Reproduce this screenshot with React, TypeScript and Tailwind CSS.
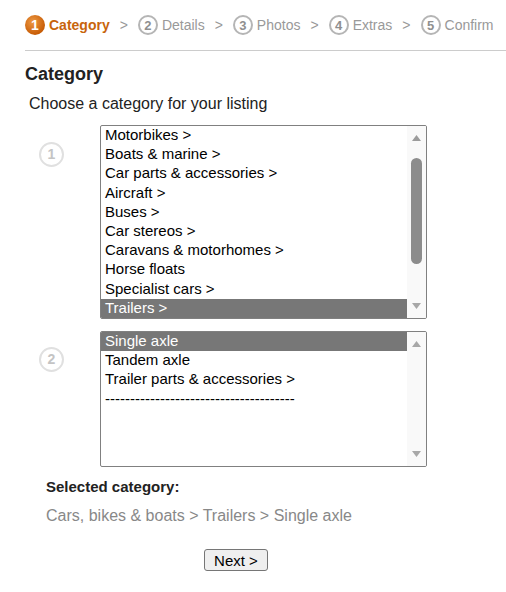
import React from 'react';

const steps = ['Category', 'Details', 'Photos', 'Extras', 'Confirm'];

const topList = [
  'Motorbikes >',
  'Boats & marine >',
  'Car parts & accessories >',
  'Aircraft >',
  'Buses >',
  'Car stereos >',
  'Caravans & motorhomes >',
  'Horse floats',
  'Specialist cars >',
  'Trailers >',
];

const subList = ['Single axle', 'Tandem axle', 'Trailer parts & accessories >', '--------------------------------------'];

const StepDot = ({ n, active }: { n: number; active: boolean }) =>
  active ? (
    <span className="w-[20px] h-[20px] rounded-full bg-[radial-gradient(circle_at_40%_35%,#ee9a45,#c85d06_70%,#b04f00)] text-white text-[14px] font-bold flex items-center justify-center leading-none">
      {n}
    </span>
  ) : (
    <span className="w-[20px] h-[20px] rounded-full border-2 border-[#b5b5b5] text-[#8f8f8f] text-[13px] font-bold flex items-center justify-center leading-none">
      {n}
    </span>
  );

const Marker = ({ n, className }: { n: number; className?: string }) => (
  <div className={`w-[25px] h-[25px] rounded-full border-2 border-[#e0e0e0] text-[#c4c4c4] text-[14px] font-bold flex items-center justify-center ${className ?? ''}`}>
    {n}
  </div>
);

const Listbox = ({
  items,
  selected,
  rows,
  thumb,
}: {
  items: string[];
  selected: number;
  rows: number;
  thumb?: { top: number; height: number };
}) => (
  <div className="flex w-[327px] border border-[#808080] rounded-[2px] bg-white overflow-hidden" style={{ height: rows * 19.2 + 2 }}>
    <div className="flex-1 flex flex-col">
      {items.map((item, i) => (
        <div
          key={item}
          className={`h-[19.2px] pl-[4px] text-[15px] leading-[18px] whitespace-nowrap ${
            i === selected ? 'bg-[#777777] text-white' : 'text-black'
          }`}
        >
          {item}
        </div>
      ))}
    </div>
    <div className="relative w-[19px] bg-[#f9f9f9]">
      <svg className="absolute left-[5px] top-[9px]" width="9" height="6" viewBox="0 0 9 6">
        <path d="M4.5 0 L9 6 L0 6 Z" fill={thumb ? '#9b9b9b' : '#a8a8a8'} />
      </svg>
      {thumb && (
        <div
          className="absolute left-[4px] w-[11px] rounded-[6px] bg-[#8c8c8c]"
          style={{ top: thumb.top, height: thumb.height }}
        />
      )}
      <svg className="absolute left-[5px] bottom-[9px]" width="9" height="6" viewBox="0 0 9 6">
        <path d="M0 0 L9 0 L4.5 6 Z" fill="#a8a8a8" />
      </svg>
    </div>
  </div>
);

export default function App() {
  return (
    <div className="w-[506px] h-[592px] bg-white pl-[25px] font-['Liberation_Sans',Arial,sans-serif] text-[#222]">
      <div className="flex items-center h-[50px] text-[14px]">
        {steps.map((s, i) => (
          <React.Fragment key={s}>
            {i > 0 && <span className="mx-[10px] text-[#999]">&gt;</span>}
            <span className="flex items-center gap-[4px]">
              <StepDot n={i + 1} active={i === 0} />
              <span className={i === 0 ? 'font-bold text-[#c8640c]' : 'text-[#999]'}>{s}</span>
            </span>
          </React.Fragment>
        ))}
      </div>
      <div className="border-t border-[#cccccc]" />

      <h2 className="mt-[13px] text-[18px] font-bold leading-[21px] text-[#222]">Category</h2>
      <p className="mt-[9px] pl-[4px] text-[16px] leading-[19px] text-[#222]">Choose a category for your listing</p>

      <div className="flex mt-[12px]">
        <Marker n={1} className="ml-[14px] mt-[17px]" />
        <div className="ml-[36px]">
          <Listbox items={topList} selected={9} rows={10} thumb={{ top: 32, height: 106 }} />
        </div>
      </div>

      <div className="flex mt-[12px]">
        <Marker n={2} className="ml-[14px] mt-[16px]" />
        <div className="ml-[36px]">
          <Listbox items={subList} selected={0} rows={7} />
        </div>
      </div>

      <div className="pl-[21px]">
        <div className="mt-[11px] text-[15px] font-bold leading-[18px] text-[#222]">Selected category:</div>
        <div className="mt-[10px] text-[16px] leading-[19px] text-[#888]">Cars, bikes &amp; boats &gt; Trailers &gt; Single axle</div>
      </div>

      <button className="mt-[24px] ml-[179px] w-[64px] h-[22px] border border-[#767676] rounded-[3px] bg-[#efefef] text-[15px] leading-none text-black">
        Next &gt;
      </button>
    </div>
  );
}
